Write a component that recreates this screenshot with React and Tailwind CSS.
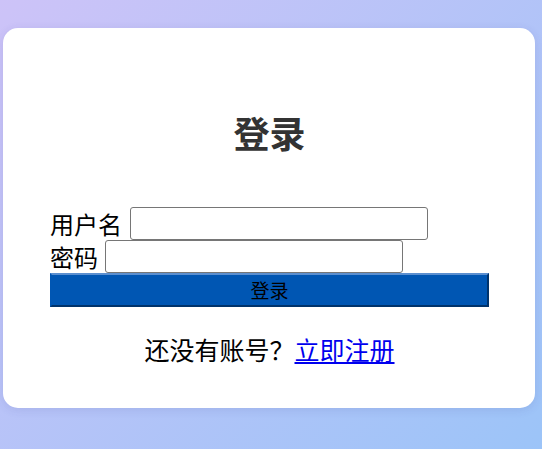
export default function App() {
  const font = { fontFamily: '"Noto Sans CJK SC", "Noto Sans", sans-serif' };
  return (
    <div
      className="w-full h-[449px] bg-[linear-gradient(135deg,#cdc3f8,#9cc4f8)] pt-[28px] px-[3px] font-['Noto_Sans_CJK_SC',sans-serif]"
      style={font}
    >
      <div className="w-[532px] h-[380px] bg-white rounded-[15px] shadow-[0_2px_10px_rgba(60,60,140,0.12)] pl-[47px] pr-[46px] pt-[83px] flex flex-col">
        <h2 className="text-[36px] leading-[43px] font-bold text-[#333] text-center">登录</h2>
        <form className="mt-[53px] flex flex-col" onSubmit={(e) => e.preventDefault()}>
          <div className="flex items-center h-[33px] gap-[8px] text-[24px] text-black">
            <label className="leading-[33px]">用户名</label>
            <input
              type="text"
              className="w-[298px] h-[33px] border border-[#767676] rounded-[3px] bg-white outline-none"
            />
          </div>
          <div className="flex items-center h-[33px] gap-[7px] text-[24px] text-black">
            <label className="leading-[33px]">密码</label>
            <input
              type="password"
              className="w-[298px] h-[33px] border border-[#767676] rounded-[3px] bg-white outline-none"
            />
          </div>
          <button
            type="submit"
            className="w-[439px] h-[34px] bg-[#0056b3] border-2 border-t-[#5b8fd0] border-l-[#0056b3] border-r-[#00336b] border-b-[#00336b] text-black text-[19px] leading-[28px]"
          >
            登录
          </button>
        </form>
        <p className="mt-[24px] text-center text-[25px] leading-[36px] text-black">
          还没有账号？<a href="#" className="text-[#0000ee] underline">立即注册</a>
        </p>
      </div>
    </div>
  );
}
